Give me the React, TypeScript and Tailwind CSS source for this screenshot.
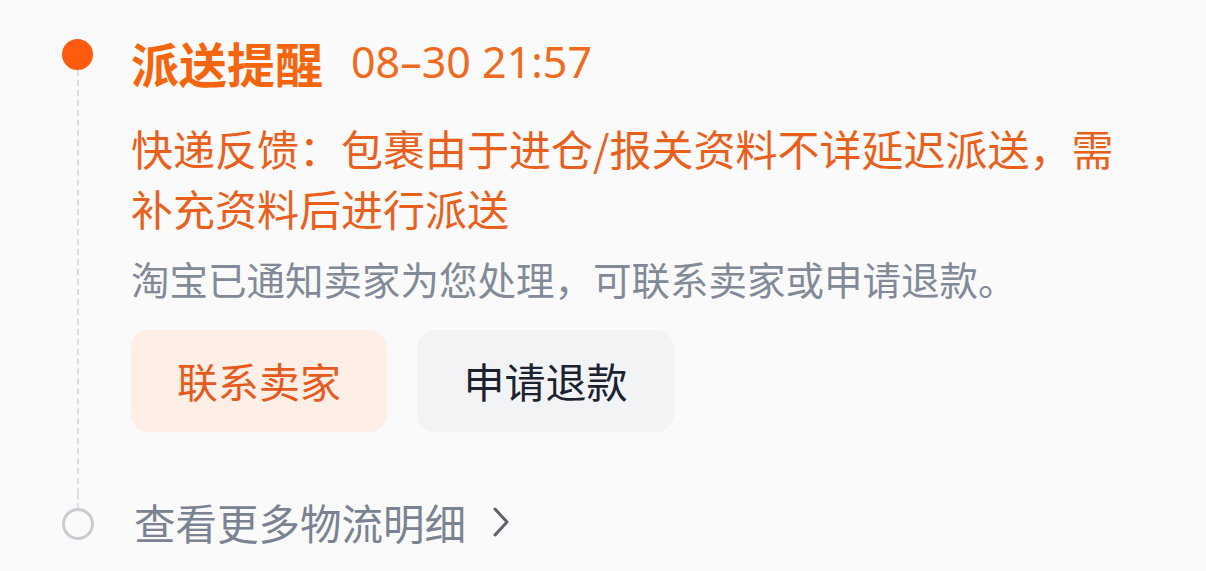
import React from "react";

const FONT = '"Noto Sans CJK SC", "Noto Sans", sans-serif';

export default function App() {
  return (
    <div
      className="w-full h-[571px] bg-[#fafafa] overflow-hidden"
      style={{ fontFamily: FONT }}
    >
      <div className="flex flex-col pl-[61px] pt-[34px]">
        {/* Row 1 */}
        <div className="flex">
          <div className="w-[33px] flex flex-col items-center shrink-0">
            <div className="mt-[5px] h-[31px] w-[31px] rounded-full bg-[#ff5b0f]" />
            <div className="flex-1 border-l-2 border-dashed border-[#dcdee2]" />
          </div>
          <div className="ml-[37px] w-[1010px] pb-[62px]">
            <div className="flex items-center h-[56px]">
              <span className="text-[48px] leading-[56px] font-bold text-[#f5650e]">
                派送提醒
              </span>
              <span
                className="ml-[28px] text-[43px] leading-[56px] text-[#f06a1e]"
                style={{ fontFamily: '"Noto Sans", "Noto Sans CJK SC", sans-serif' }}
              >
                08–30 21:57
              </span>
            </div>
            <p className="mt-[28px] text-[42px] leading-[60px] text-[#e9601c]">
              快递反馈：包裹由于进仓/报关资料不详延迟派送，需补充资料后进行派送
            </p>
            <p className="mt-[14px] text-[38.5px] leading-[52px] text-[#828a98]">
              淘宝已通知卖家为您处理，可联系卖家或申请退款。
            </p>
            <div className="mt-[26px] flex gap-[30px]">
              <button className="w-[256px] h-[102px] rounded-[18px] bg-[#fdeee6] text-[41px] text-[#e65a1e] flex items-center justify-center">
                联系卖家
              </button>
              <button className="w-[257px] h-[102px] rounded-[18px] bg-[#f2f3f5] text-[41px] text-[#1c2230] flex items-center justify-center">
                申请退款
              </button>
            </div>
          </div>
        </div>
        {/* Row 2 */}
        <div className="flex">
          <div className="w-[33px] flex flex-col items-center shrink-0">
            <div className="h-[14px] border-l-2 border-dashed border-[#dcdee2]" />
            <div className="h-[32px] w-[32px] rounded-full border-[3px] border-[#c8ccd2]" />
          </div>
          <div className="ml-[37px] flex items-center h-[56px]">
            <span className="pl-[3px] text-[41.5px] leading-[56px] text-[#7b8392]">
              查看更多物流明细
            </span>
            <svg
              className="ml-[26px]"
              width="18"
              height="30"
              viewBox="0 0 18 30"
              fill="none"
            >
              <path
                d="M3 2 L15 15 L3 28"
                stroke="#5d626b"
                strokeWidth="3"
                strokeLinecap="round"
                strokeLinejoin="round"
              />
            </svg>
          </div>
        </div>
      </div>
    </div>
  );
}
